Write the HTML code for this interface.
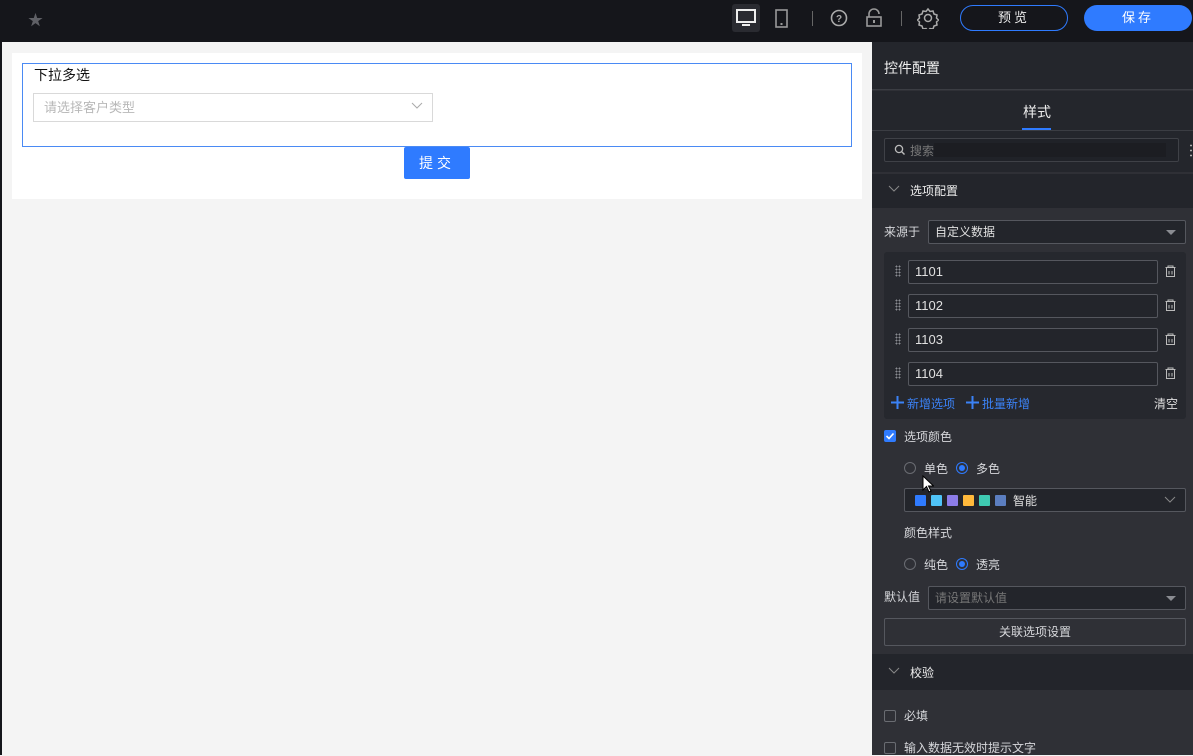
<!DOCTYPE html>
<html><head><meta charset="utf-8"><style>
*{box-sizing:border-box;margin:0;padding:0}
body{width:1193px;height:755px;overflow:hidden;background:#f4f4f4;font-family:"Liberation Sans","Noto Sans CJK SC",sans-serif;font-size:12px;position:relative}
.a{position:absolute}
.top{left:0;top:0;width:1193px;height:42px;background:#15161b}
.panel{left:872px;top:42px;width:321px;height:713px;background:#2f3036;color:#d6d7db}
.inp{position:absolute;border:1px solid #55575e;background:#23252b;border-radius:2px;color:#e0e0e0;padding-left:8px;line-height:22px;font-size:12px}
.num{font-size:13px}
.tri{position:absolute;right:9px;top:9px;width:0;height:0;border-left:5px solid transparent;border-right:5px solid transparent;border-top:5px solid #8a8c92}
.radio{position:absolute;width:12px;height:12px;border-radius:50%;border:1px solid #6a6c72}
.radio.on{border-color:#2f7bff}
.radio.on::after{content:"";position:absolute;left:2px;top:2px;width:6px;height:6px;border-radius:50%;background:#2f7bff}
.cb{position:absolute;width:12px;height:12px;border:1px solid #6a6c72;border-radius:2px}
.trash{position:absolute;width:11px;height:12px}
.drag{position:absolute;width:6px;height:12px;background-image:radial-gradient(circle,#8a8c92 0.8px,transparent 1px);background-size:3px 3px}
.sw{display:inline-block;width:11px;height:11px;margin-right:5px;border-radius:1px;vertical-align:middle}
.t{margin-top:-1px}
</style></head><body>
<div class="a top">
 <div class="a" style="left:28px;top:9px;color:#5f6066;font-size:15px">★</div>
 <div class="a" style="left:732px;top:4px;width:28px;height:28px;background:#2a2b31;border-radius:3px"></div>
 <svg class="a" style="left:735px;top:8px" width="22" height="20" viewBox="0 0 22 20"><rect x="2" y="2" width="18" height="12" fill="none" stroke="#eee" stroke-width="2"/><rect x="7" y="16" width="8" height="2" fill="#eee"/></svg>
 <svg class="a" style="left:774px;top:9px" width="16" height="20"><rect x="2" y="1" width="11" height="17" fill="none" stroke="#999" stroke-width="1.6"/><rect x="6.5" y="14" width="2" height="2" fill="#999"/></svg>
 <div class="a" style="left:812px;top:11px;width:1px;height:15px;background:#666"></div>
 <svg class="a" style="left:829px;top:8px" width="20" height="20"><circle cx="10" cy="10" r="7.5" fill="none" stroke="#aaa" stroke-width="1.6"/><text x="10" y="14" font-size="10" fill="#aaa" text-anchor="middle" font-family="Liberation Sans" font-weight="bold">?</text></svg>
 <svg class="a" style="left:865px;top:8px" width="18" height="20"><path d="M4 9V6a5 5 0 0 1 10 0" fill="none" stroke="#999" stroke-width="1.6"/><rect x="2" y="9" width="14" height="9" fill="none" stroke="#999" stroke-width="1.6"/><rect x="8" y="12" width="2" height="3" fill="#999"/></svg>
 <div class="a" style="left:901px;top:11px;width:1px;height:15px;background:#666"></div>
 <svg class="a" style="left:917px;top:7px" width="22" height="22" viewBox="0 0 22 22"><path d="M11 2l2 2.5 3-.5 1 3 3 1-.5 3 2 2-2 2 .5 3-3 1-1 3-3-.5-2 2.5-2-2.5-3 .5-1-3-3-1 .5-3-2-2 2-2-.5-3 3-1 1-3 3 .5z" fill="none" stroke="#aaa" stroke-width="1.5"/><circle cx="11" cy="11" r="3.5" fill="none" stroke="#aaa" stroke-width="1.5"/></svg>
 <div class="a" style="left:960px;top:5px;width:108px;height:26px;border:1px solid #2f7bff;border-radius:13px;color:#eee;text-align:center;line-height:24px;font-size:13px;letter-spacing:3px">预览</div>
 <div class="a" style="left:1084px;top:5px;width:108px;height:26px;background:#2f7bff;border-radius:13px;color:#fff;text-align:center;line-height:26px;font-size:13px;letter-spacing:3px">保存</div>
</div>
<div class="a" style="left:0;top:42px;width:2px;height:713px;background:#15161b"></div>
<div class="a" style="left:12px;top:53px;width:850px;height:146px;background:#fff"></div>
<div class="a" style="left:22px;top:63px;width:830px;height:84px;border:1px solid #4a8af4"></div>
<div class="a" style="left:34px;top:65px;font-size:14px;color:#111">下拉多选</div>
<div class="a" style="left:33px;top:93px;width:400px;height:29px;border:1px solid #d9d9d9;color:#b8b8b8;font-size:13px;line-height:27px;padding-left:10px">请选择客户类型</div>
<svg class="a" style="left:411px;top:102px" width="12" height="8"><path d="M1 1l5 5 5-5" fill="none" stroke="#aaa" stroke-width="1"/></svg>
<div class="a" style="left:404px;top:147px;width:66px;height:32px;background:#2f7bff;border-radius:2px;color:#fff;font-size:14px;text-align:center;line-height:32px;letter-spacing:4px">提交</div>

<div class="a panel">
 <div class="a" style="left:0;top:0;width:321px;height:48px;background:#24262c;border-bottom:1px solid #3b3d43"></div>
 <div class="a" style="left:12px;top:16px;font-size:14px;color:#eee">控件配置</div>
 <div class="a" style="left:0;top:49px;width:321px;height:82px;background:#24262c"></div>
 <div class="a" style="left:151px;top:60px;font-size:14px;color:#eee">样式</div>
 <div class="a" style="left:150px;top:86px;width:29px;height:2px;background:#2f7bff"></div>
 <div class="a" style="left:0;top:88px;width:321px;height:1px;background:#3b3d43"></div>
 <div class="a" style="left:12px;top:96px;width:295px;height:24px;border:1px solid #3f4147;border-radius:2px;background:#202228"></div>
 <svg class="a" style="left:22px;top:102px" width="12" height="12"><circle cx="5" cy="5" r="3.6" fill="none" stroke="#bbb" stroke-width="1.3"/><path d="M7.5 7.5l3 3" stroke="#bbb" stroke-width="1.4"/></svg>
 <div class="a" style="left:38px;top:100px;color:#777;font-size:12px">搜索</div>
 <div class="a" style="left:62px;top:101px;width:232px;height:14px;background:#1c1d22"></div>
 <div class="a" style="left:318px;top:101px;width:2px;height:16px;background-image:radial-gradient(circle,#aaa 1px,transparent 1px);background-size:2px 5px"></div>
 <div class="a" style="left:0;top:130px;width:321px;height:36px;background:#23252b;border-top:2px solid #2f3036"></div>
 <svg class="a" style="left:16px;top:143px" width="12" height="8"><path d="M1 1l5 5 5-5" fill="none" stroke="#888" stroke-width="1"/></svg>
 <div class="a" style="left:38px;top:140px;color:#eee">选项配置</div>

 <div class="a" style="left:12px;top:181px;color:#d6d7db">来源于</div>
 <div class="inp" style="left:56px;top:178px;width:258px;height:24px;padding-left:6px">自定义数据<span class="tri"></span></div>
 <div class="a" style="left:12px;top:210px;width:302px;height:167px;background:#26282e;border-radius:3px"></div>
 <div class="drag" style="left:23px;top:223px"></div><div class="inp num" style="left:36px;top:218px;width:250px;height:24px;padding-left:6px">1101</div>
 <div class="drag" style="left:23px;top:257px"></div><div class="inp num" style="left:36px;top:252px;width:250px;height:24px;padding-left:6px">1102</div>
 <div class="drag" style="left:23px;top:291px"></div><div class="inp num" style="left:36px;top:286px;width:250px;height:24px;padding-left:6px">1103</div>
 <div class="drag" style="left:23px;top:325px"></div><div class="inp num" style="left:36px;top:320px;width:250px;height:24px;padding-left:6px">1104</div>
 <svg class="trash" style="left:293px;top:223px"><path d="M0.5 2.5h10M3 2.5V1h5v1.5M1.5 3v8.5h8V3M4 6v3.5M7 6v3.5" fill="none" stroke="#bbb" stroke-width="1"/></svg>
 <svg class="trash" style="left:293px;top:257px"><path d="M0.5 2.5h10M3 2.5V1h5v1.5M1.5 3v8.5h8V3M4 6v3.5M7 6v3.5" fill="none" stroke="#bbb" stroke-width="1"/></svg>
 <svg class="trash" style="left:293px;top:291px"><path d="M0.5 2.5h10M3 2.5V1h5v1.5M1.5 3v8.5h8V3M4 6v3.5M7 6v3.5" fill="none" stroke="#bbb" stroke-width="1"/></svg>
 <svg class="trash" style="left:293px;top:325px"><path d="M0.5 2.5h10M3 2.5V1h5v1.5M1.5 3v8.5h8V3M4 6v3.5M7 6v3.5" fill="none" stroke="#bbb" stroke-width="1"/></svg>
 <svg class="a" style="left:19px;top:354px" width="13" height="13"><path d="M6.5 0v13M0 6.5h13" stroke="#3b82f6" stroke-width="2"/></svg>
 <div class="a" style="left:35px;top:353px;color:#3b82f6">新增选项</div>
 <svg class="a" style="left:94px;top:354px" width="13" height="13"><path d="M6.5 0v13M0 6.5h13" stroke="#3b82f6" stroke-width="2"/></svg>
 <div class="a" style="left:110px;top:353px;color:#3b82f6">批量新增</div>
 <div class="a" style="left:282px;top:353px;color:#ddd">清空</div>

 <div class="a" style="left:12px;top:388px;width:12px;height:12px;background:#2f7bff;border-radius:2px"><svg width="12" height="12"><path d="M2.5 6l2.5 2.5 4.5-5" fill="none" stroke="#fff" stroke-width="1.6"/></svg></div>
 <div class="a" style="left:32px;top:386px">选项颜色</div>
 <div class="radio" style="left:32px;top:420px"></div><div class="a" style="left:52px;top:418px">单色</div>
 <div class="radio on" style="left:84px;top:420px"></div><div class="a" style="left:104px;top:418px">多色</div>
 <div class="inp" style="left:32px;top:446px;width:282px;height:24px;padding-left:10px"><span class="sw" style="background:#2f7bff"></span><span class="sw" style="background:#4fc3f7"></span><span class="sw" style="background:#8c7ce8"></span><span class="sw" style="background:#ffb93b"></span><span class="sw" style="background:#3ec9b1"></span><span class="sw" style="background:#5b7ec0"></span><span style="vertical-align:middle;margin-left:2px">智能</span></div>
 <svg class="a" style="left:292px;top:454px" width="12" height="8"><path d="M1 1l5 5 5-5" fill="none" stroke="#888" stroke-width="1"/></svg>
 <div class="a" style="left:32px;top:482px">颜色样式</div>
 <div class="radio" style="left:32px;top:516px"></div><div class="a" style="left:52px;top:514px">纯色</div>
 <div class="radio on" style="left:84px;top:516px"></div><div class="a" style="left:104px;top:514px">透亮</div>
 <div class="a" style="left:12px;top:546px">默认值</div>
 <div class="inp" style="left:56px;top:544px;width:258px;height:24px;color:#777;padding-left:6px">请设置默认值<span class="tri"></span></div>
 <div class="a" style="left:12px;top:576px;width:302px;height:28px;border:1px solid #55575e;border-radius:2px;text-align:center;line-height:26px">关联选项设置</div>
 <div class="a" style="left:0;top:612px;width:321px;height:36px;background:#23252b"></div>
 <svg class="a" style="left:16px;top:625px" width="12" height="8"><path d="M1 1l5 5 5-5" fill="none" stroke="#888" stroke-width="1"/></svg>
 <div class="a" style="left:38px;top:622px;color:#eee">校验</div>
 <div class="cb" style="left:12px;top:668px"></div><div class="a" style="left:32px;top:665px">必填</div>
 <div class="cb" style="left:12px;top:700px"></div><div class="a" style="left:32px;top:697px">输入数据无效时提示文字</div>
</div>
<svg class="a" style="left:922px;top:475px" width="12" height="20"><path d="M1 1v14l3.5-3.5 2.5 5.5 2-1-2.5-5h5z" fill="#fff" stroke="#000" stroke-width="1"/></svg>
</body></html>
